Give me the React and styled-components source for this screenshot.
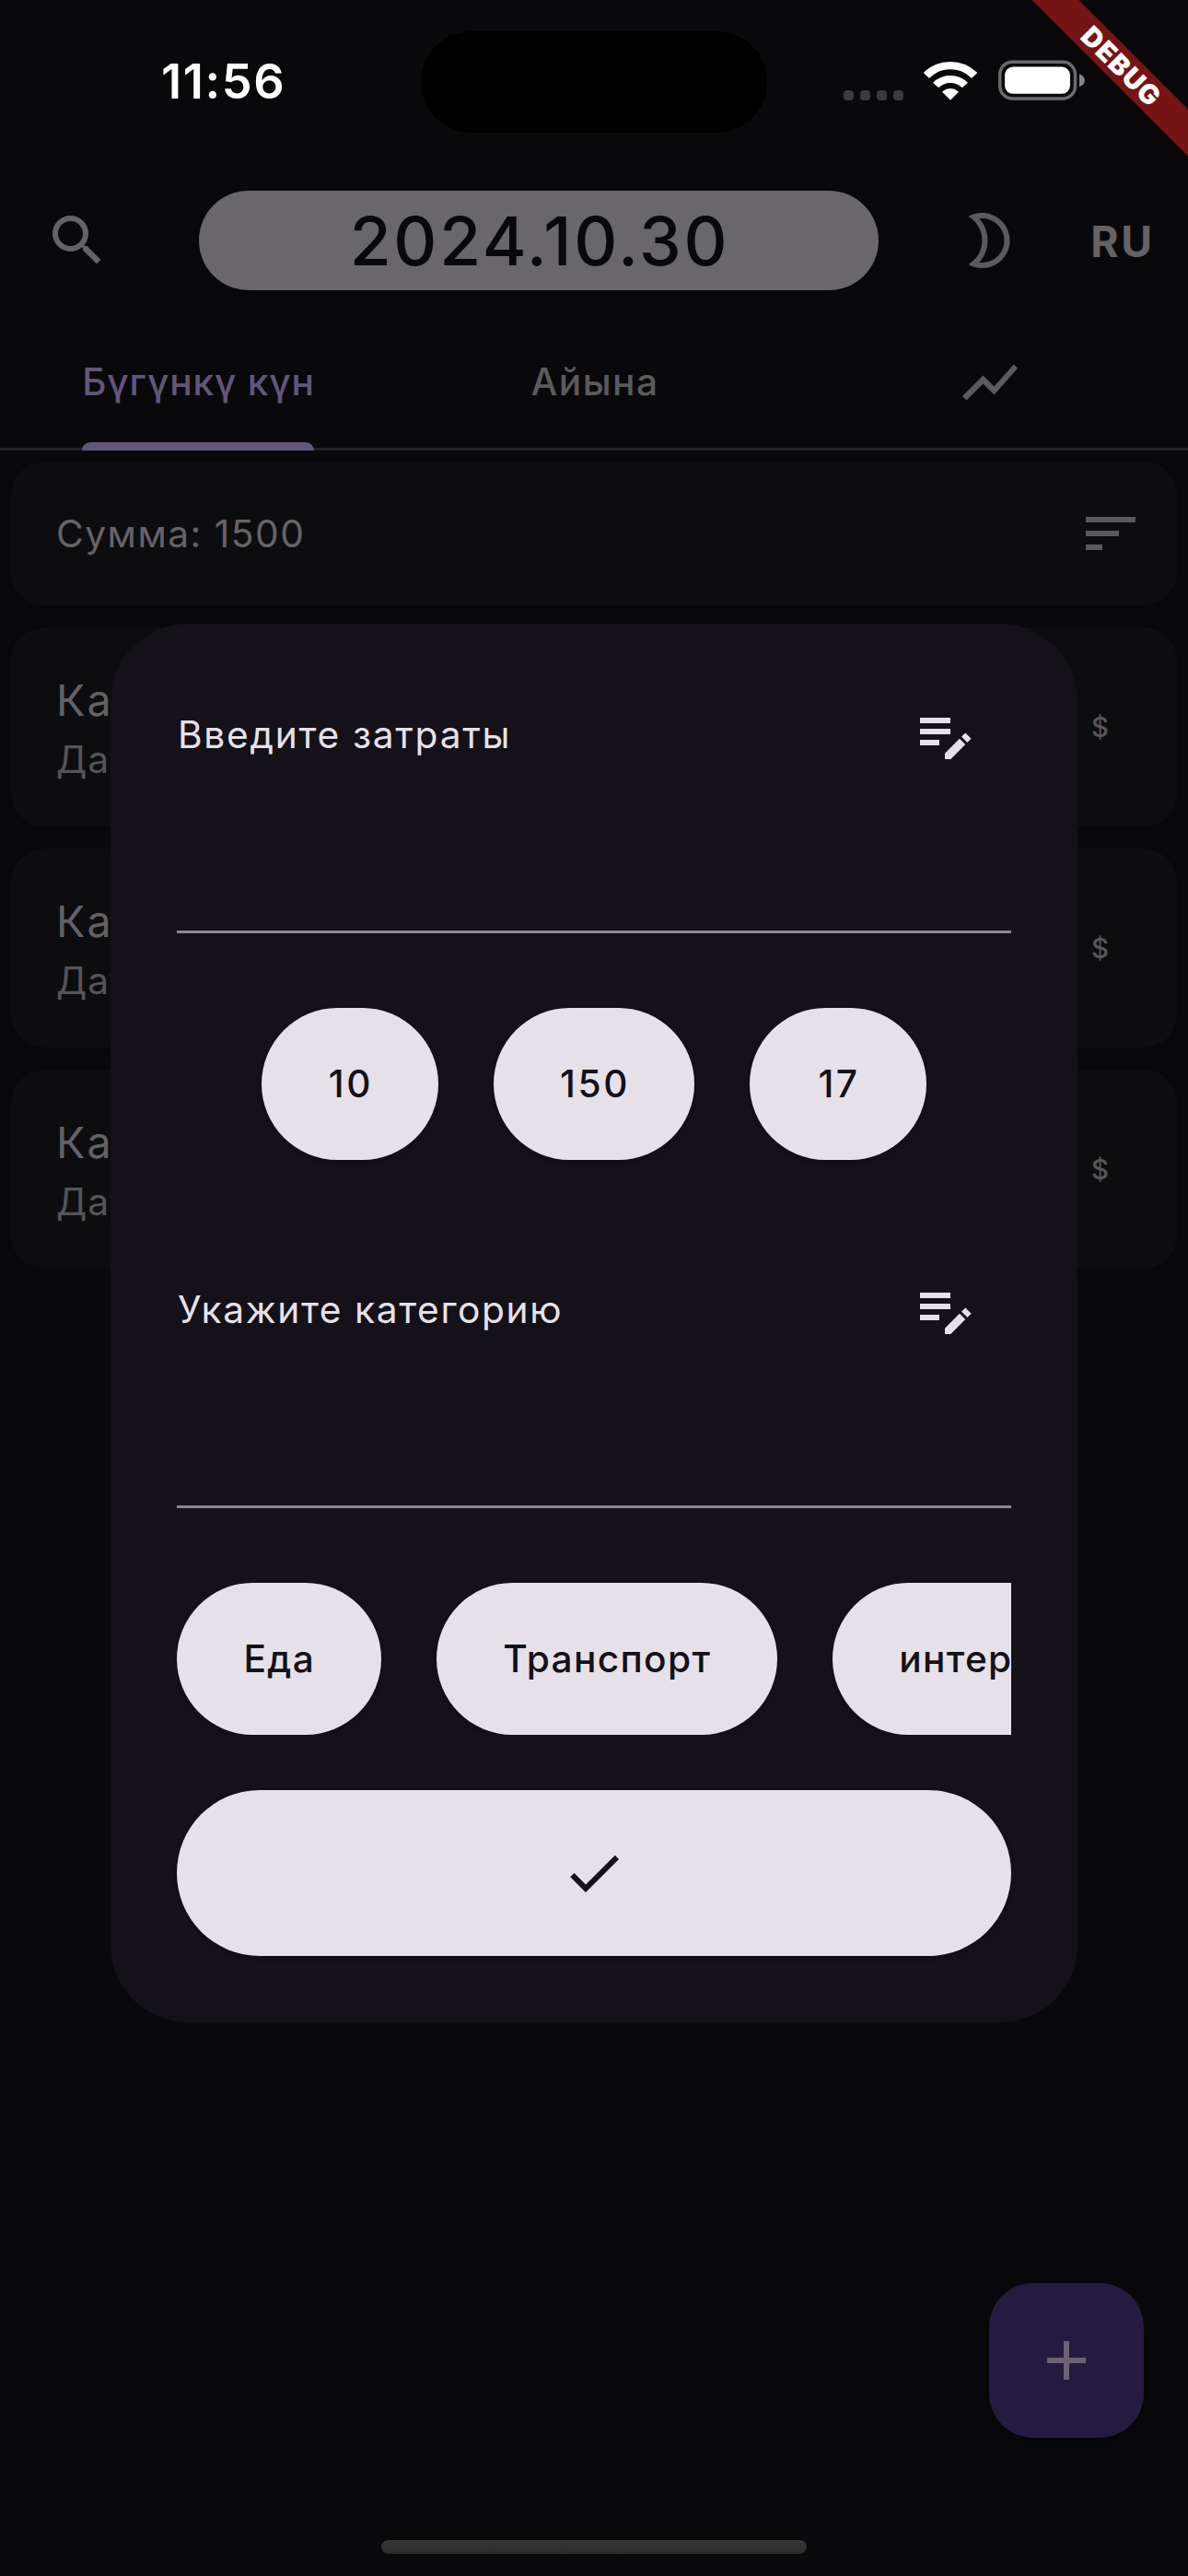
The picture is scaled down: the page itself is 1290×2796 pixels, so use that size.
import React from 'react';
import styled, { createGlobalStyle } from 'styled-components';

const GlobalStyle = createGlobalStyle`
  * { box-sizing: border-box; }
  html, body { margin: 0; padding: 0; background: #09090b; }
  body { font-family: Inter, Roboto, sans-serif; }
  button { font-family: inherit; border: 0; padding: 0; background: none; color: inherit; }
`;

const Screen = styled.div`
  position: relative;
  width: 1290px;
  height: 2796px;
  overflow: hidden;
  display: flex;
  flex-direction: column;
  background: #09090b;
`;

/* Status bar */
const StatusBar = styled.div`
  flex: none;
  height: 177px;
  display: grid;
  grid-template-columns: 457px 376px 1fr;
  align-items: center;
`;
const Time = styled.div`
  padding: 0 0 2px 175px;
  font-size: 52.3px;
  font-weight: 600;
  letter-spacing: 1.6px;
  line-height: 60px;
  color: #fff;
`;
const Island = styled.div`
  height: 110px;
  border-radius: 55px;
  background: #000;
`;
const StatusIcons = styled.div`
  display: flex;
  align-items: flex-end;
  padding: 0 0 4px 83px;
`;
const Dots = styled.div`
  display: flex;
  gap: 7px;
  margin-right: 22px;
`;
const Dot = styled.span`
  width: 11px;
  height: 11px;
  border-radius: 4px;
  background: #3b3b3d;
`;
const Wifi = styled.svg`
  width: 58px;
  height: 43px;
  margin-right: 23px;
`;
const Battery = styled.svg`
  width: 95px;
  height: 44px;
`;

/* App bar */
const AppBar = styled.header`
  flex: none;
  height: 168px;
  display: flex;
  align-items: center;
  padding-left: 12px;
`;
const IconButton = styled.button`
  flex: none;
  width: 144px;
  height: 144px;
  display: flex;
  align-items: center;
  justify-content: center;
  color: ${(p) => p.$color};
`;
const Icon = styled.svg`
  display: block;
  width: 72px;
  height: 72px;
  fill: currentColor;
`;
const DatePill = styled.div`
  width: 738px;
  height: 108px;
  margin: 0 48px 0 60px;
  padding-left: 2px;
  display: flex;
  align-items: center;
  justify-content: center;
  border-radius: 54px;
  background: #6a676b;
  color: #09090b;
  font-size: 73px;
  font-weight: 500;
  letter-spacing: 2.7px;
  box-shadow: 0 3px 6px rgba(0, 0, 0, 0.25);
`;
const Language = styled.button`
  flex: none;
  width: 144px;
  color: #656266;
  font-size: 46.3px;
  font-weight: 700;
  letter-spacing: 2.6px;
  line-height: 60px;
  padding: 1px 0 0 2px;
`;

/* Tabs */
const Tabs = styled.nav`
  flex: none;
  height: 144px;
  display: grid;
  grid-template-columns: repeat(3, 1fr);
  box-shadow: inset 0 -3px #222224;
`;
const Tab = styled.div`
  display: flex;
  flex-direction: column;
  align-items: center;
  color: ${(p) => (p.$active ? '#615679' : '#5c5a5d')};
`;
const TabLabel = styled.div`
  height: 135px;
  padding: 4px 0 0 ${(p) => p.$shift || '0'};
  display: flex;
  align-items: center;
  font-size: 40.7px;
  font-weight: 500;
  letter-spacing: ${(p) => p.$spacing || '0.8px'};
`;
const Indicator = styled.div`
  width: 252px;
  height: 9px;
  border-radius: 9px 9px 0 0;
  background: #615679;
`;

/* Expense list */
const List = styled.main`
  display: flex;
  flex-direction: column;
  gap: 24px;
  padding: 12px 12px 0;
`;
const Card = styled.section`
  display: flex;
  align-items: center;
  justify-content: space-between;
  height: ${(p) => p.$height};
  padding: 0 ${(p) => p.$right} 0 48px;
  border-radius: 36px;
  background: #0d0d0f;
  box-shadow: 0 3px 6px rgba(0, 0, 0, 0.15);
`;
const Total = styled.div`
  padding: 1px 0 0 1px;
  font-size: 40.7px;
  letter-spacing: 1.5px;
  color: #666367;
`;
const CardText = styled.div`
  padding-left: 1px;
`;
const CardTitle = styled.div`
  font-size: 46.7px;
  letter-spacing: 2.2px;
  line-height: 72px;
  color: #646165;
`;
const CardDate = styled.div`
  font-size: 40.7px;
  letter-spacing: 1px;
  line-height: 58px;
  color: #565458;
`;
const Currency = styled.div`
  padding-top: 2px;
  font-size: 29.4px;
  font-weight: 500;
  color: #58565a;
`;
const AddButton = styled.button`
  position: absolute;
  left: 1074px;
  top: 2478px;
  width: 168px;
  height: 168px;
  display: flex;
  align-items: center;
  justify-content: center;
  border-radius: 48px;
  background: #251a40;
  color: #6b6375;
  box-shadow: 0 12px 21px rgba(0, 0, 0, 0.3);
`;
const HomeIndicator = styled.div`
  position: absolute;
  left: 414px;
  top: 2757px;
  width: 462px;
  height: 15px;
  border-radius: 8px;
  background: linear-gradient(#363636, #2b2b2c);
`;

/* Dialog */
const Overlay = styled.div`
  position: absolute;
  inset: 0;
  display: flex;
  align-items: flex-start;
  justify-content: center;
  padding-top: 676.5px;
`;
const Dialog = styled.div`
  width: 1050px;
  height: 1518px;
  padding: 48.5px 72px 72px;
  display: flex;
  flex-direction: column;
  border-radius: 84px;
  background: #141118;
`;
const FieldHeader = styled.div`
  display: flex;
  align-items: center;
  justify-content: space-between;
  height: 144px;
`;
const FieldTitle = styled.div`
  padding-left: 1px;
  font-size: 40.7px;
  letter-spacing: ${(p) => p.$spacing};
  color: #e6e1e8;
`;
const FieldInput = styled.div`
  height: 143.5px;
  border-bottom: 3px solid #8a878e;
`;
const ChipRow = styled.div`
  display: flex;
  justify-content: ${(p) => (p.$centered ? 'center' : 'flex-start')};
  gap: 60px;
  height: 165px;
  margin: 81px 0 ${(p) => p.$after};
  overflow: ${(p) => (p.$centered ? 'visible' : 'hidden')};
`;
const Chip = styled.button`
  flex: none;
  min-width: 192px;
  height: 165px;
  padding: 0 ${(p) => (p.$numeric ? '70px 0 72px' : '71.5px 0 72.5px')};
  border-radius: 82.5px;
  background: #e6e1e8;
  color: #141118;
  font-size: 40.7px;
  font-weight: 500;
  letter-spacing: ${(p) => (p.$numeric ? '2.6px' : '1.3px')};
  white-space: nowrap;
  box-shadow: 0 3px 6px rgba(0, 0, 0, 0.2);
`;
const Submit = styled.button`
  height: 180px;
  display: flex;
  align-items: center;
  justify-content: center;
  border-radius: 90px;
  background: #e6e1e8;
  color: #141118;
  box-shadow: 0 3px 6px rgba(0, 0, 0, 0.2);
`;

const DebugBanner = styled.div`
  position: absolute;
  left: 1068px;
  top: 54px;
  width: 300px;
  height: 36px;
  display: flex;
  align-items: center;
  justify-content: center;
  transform: rotate(45deg);
  background: #751415;
  color: #fff;
  font-size: 29.5px;
  font-weight: 900;
  letter-spacing: 1.2px;
  box-shadow: 0 0 18px rgba(0, 0, 0, 0.4);
`;

const EditNote = () => (
  <Icon viewBox="0 0 24 24">
    <path d="M3 6h11v2H3zM3 10h11v2H3zM3 14h7v2H3zM18.01 12.87l1.41-1.41 2.12 2.12-1.41 1.41zM17.3 13.58l-5.3 5.3V21h2.12l5.3-5.3z" />
  </Icon>
);

function Field({ title, spacing }) {
  return (
    <>
      <FieldHeader>
        <FieldTitle $spacing={spacing}>{title}</FieldTitle>
        <IconButton $color="#e6e1e8"><EditNote /></IconButton>
      </FieldHeader>
      <FieldInput />
    </>
  );
}

export default function App() {
  return (
    <Screen>
      <GlobalStyle />
      <StatusBar>
        <Time>11:56</Time>
        <Island />
        <StatusIcons>
          <Dots><Dot /><Dot /><Dot /><Dot /></Dots>
          <Wifi viewBox="0 0 174 129" fill="#fff" stroke="#fff" strokeWidth="4" strokeLinejoin="round">
            <path d="M2 39A123 123 0 0 1 172 39L156 54A99 99 0 0 0 18 54Z" />
            <path d="M33 71A79 79 0 0 1 141 71L125.5 85A57 57 0 0 0 48.5 85Z" />
            <path d="M63 101A37 37 0 0 1 111 101L87 125.5Z" />
          </Wifi>
          <Battery viewBox="0 0 95 44">
            <rect x="1.8" y="2.2" width="81.7" height="39.8" rx="13.5" fill="none" stroke="#6b6b6d" strokeWidth="3.5" />
            <rect x="7" y="7.5" width="71" height="29.3" rx="9" fill="#fff" />
            <path d="M88 15.3Q93.8 17.3 93.8 22.2T88 29Z" fill="#858587" />
          </Battery>
        </StatusIcons>
      </StatusBar>

      <AppBar>
        <IconButton $color="#656266">
          <Icon viewBox="0 0 24 24">
            <path d="M15.5 14h-.79l-.28-.27A6.471 6.471 0 0 0 16 9.5 6.5 6.5 0 1 0 9.5 16c1.61 0 3.09-.59 4.23-1.57l.27.28v.79l5 4.99L20.49 19l-4.99-5zm-6 0C7.01 14 5 11.99 5 9.5S7.01 5 9.5 5 14 7.01 14 9.5 11.99 14 9.5 14z" />
          </Icon>
        </IconButton>
        <DatePill>2024.10.30</DatePill>
        <IconButton $color="#5c5a5e">
          <Icon viewBox="0 0 24 24">
            <path d="M9.5 4c4.41 0 8 3.59 8 8s-3.59 8-8 8c-.34 0-.68-.02-1.01-.07 1.91-2.16 3.01-4.98 3.01-7.93s-1.1-5.77-3.01-7.93C8.82 4.02 9.16 4 9.5 4m0-2c-1.82 0-3.53.5-5 1.35 2.99 1.73 5 4.95 5 8.65s-2.01 6.92-5 8.65c1.47.85 3.18 1.35 5 1.35 5.52 0 10-4.48 10-10S15.02 2 9.5 2z" />
          </Icon>
        </IconButton>
        <Language>RU</Language>
      </AppBar>

      <Tabs>
        <Tab $active>
          <TabLabel $shift="1px">Бүгүнкү күн</TabLabel>
          <Indicator />
        </Tab>
        <Tab>
          <TabLabel $shift="2px" $spacing="1.4px">Айына</TabLabel>
        </Tab>
        <Tab>
          <TabLabel>
            <Icon viewBox="0 0 24 24">
              <path d="M3.5 18.49l6-6.01 4 4L22 6.92l-1.41-1.41-7.09 7.97-4-4L2 16.99z" />
            </Icon>
          </TabLabel>
        </Tab>
      </Tabs>

      <List>
        <Card $height="155.5px" $right="0">
          <Total>Сумма: 1500</Total>
          <IconButton $color="#5a585c">
            <Icon viewBox="0 0 24 24">
              <path d="M3 18h6v-2H3v2zM3 6v2h18V6H3zm0 7h12v-2H3v2z" />
            </Icon>
          </IconButton>
        </Card>
        {[0, 1, 2].map((id) => (
          <Card key={id} $height="216px" $right="74px">
            <CardText>
              <CardTitle>Категория</CardTitle>
              <CardDate>Дата</CardDate>
            </CardText>
            <Currency>$</Currency>
          </Card>
        ))}
      </List>

      <AddButton>
        <Icon viewBox="0 0 24 24">
          <path d="M19 13h-6v6h-2v-6H5v-2h6V5h2v6h6v2z" />
        </Icon>
      </AddButton>

      <Overlay>
        <Dialog>
          <Field title="Введите затраты" spacing="1.7px" />
          <ChipRow $centered $after="90.5px">
            <Chip $numeric>10</Chip>
            <Chip $numeric>150</Chip>
            <Chip $numeric>17</Chip>
          </ChipRow>
          <Field title="Укажите категорию" spacing="1.6px" />
          <ChipRow $after="60px">
            <Chip>Еда</Chip>
            <Chip>Транспорт</Chip>
            <Chip>интернет</Chip>
          </ChipRow>
          <Submit>
            <Icon viewBox="0 0 24 24">
              <path d="M9 16.17L4.83 12l-1.42 1.41L9 19 21 7l-1.41-1.41z" />
            </Icon>
          </Submit>
        </Dialog>
      </Overlay>

      <HomeIndicator />
      <DebugBanner>DEBUG</DebugBanner>
    </Screen>
  );
}
